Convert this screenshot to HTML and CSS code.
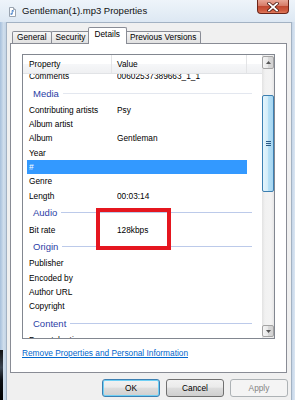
FILE: index.html
```html
<!DOCTYPE html>
<html lang="en">
<head>
    <meta charset="UTF-8">
    <meta name="viewport" content="width=device-width, initial-scale=1.0">
    <title>Gentleman(1).mp3 Properties</title>
    <link rel="stylesheet" href="styles.css">
</head>
<body>

<div class="window">
    <!-- title bar -->
    <div class="titlebar">
        <svg class="file-icon" viewBox="0 0 7 10" width="7" height="10">
            <path d="M0.5 0.5 H4.5 L6.5 2.5 V9.5 H0.5 Z" fill="#fff" stroke="#9aa4b0" stroke-width="1"/>
            <path d="M4.5 0.5 V2.5 H6.5" fill="#e4e8ee" stroke="#9aa4b0" stroke-width="1"/>
            <path d="M3.2 3.4 V6.8" stroke="#2f6fc0" stroke-width="0.9"/>
            <path d="M3.2 3.4 L5 4.2" stroke="#2f6fc0" stroke-width="0.9"/>
            <ellipse cx="2.4" cy="7" rx="1.1" ry="0.8" fill="#2f6fc0"/>
        </svg>
        <span class="title">Gentleman(1).mp3 Properties</span>
        <div class="close">
            <svg viewBox="0 0 12 10" width="12" height="10">
                <path d="M2 1.5 L10 8.5 M10 1.5 L2 8.5" stroke="#4a1a12" stroke-width="3.4" stroke-linecap="square"/>
                <path d="M2 1.5 L10 8.5 M10 1.5 L2 8.5" stroke="#fff" stroke-width="1.8" stroke-linecap="square"/>
            </svg>
        </div>
    </div>

    <div class="frame">
        <div class="edge edge-left"></div>

        <div class="client">
            <div class="tabs">
                <div class="tab">General</div>
                <div class="tab">Security</div>
                <div class="tab active">Details</div>
                <div class="tab">Previous Versions</div>
            </div>

            <div class="panel">
                <div class="listview">
                    <div class="list-main">
                        <div class="list-header">
                            <div class="col col-prop">Property</div>
                            <div class="col col-value">Value</div>
                            <div class="col col-rest"></div>
                        </div>
                        <div class="list-body">
                            <div class="list-rows">
                                <div class="row"><span class="cell-prop">Comments</span><span class="cell-value">00602537389663_1_1</span></div>
                                <div class="group faded">Media</div>
                                <div class="row"><span class="cell-prop">Contributing artists</span><span class="cell-value">Psy</span></div>
                                <div class="row"><span class="cell-prop">Album artist</span><span class="cell-value"></span></div>
                                <div class="row"><span class="cell-prop">Album</span><span class="cell-value">Gentleman</span></div>
                                <div class="row"><span class="cell-prop">Year</span><span class="cell-value"></span></div>
                                <div class="row selected"><span class="cell-prop">#</span><span class="cell-value"></span></div>
                                <div class="row"><span class="cell-prop">Genre</span><span class="cell-value"></span></div>
                                <div class="row"><span class="cell-prop">Length</span><span class="cell-value">00:03:14</span></div>
                                <div class="group">Audio</div>
                                <div class="row"><span class="cell-prop">Bit rate</span><span class="cell-value">128kbps</span></div>
                                <div class="group">Origin</div>
                                <div class="row"><span class="cell-prop">Publisher</span><span class="cell-value"></span></div>
                                <div class="row"><span class="cell-prop">Encoded by</span><span class="cell-value"></span></div>
                                <div class="row"><span class="cell-prop">Author URL</span><span class="cell-value"></span></div>
                                <div class="row"><span class="cell-prop">Copyright</span><span class="cell-value"></span></div>
                                <div class="group">Content</div>
                                <div class="row"><span class="cell-prop">Parental rating reason</span><span class="cell-value"></span></div>
                            </div>
                        </div>
                    </div>

                    <div class="scrollbar">
                        <div class="sb-btn">
                            <svg viewBox="0 0 5 3" width="5" height="3"><path d="M0 3 L2.5 0 L5 3 Z" fill="#555"/></svg>
                        </div>
                        <div class="sb-track">
                            <div class="sb-thumb">
                                <svg viewBox="0 0 5 5" width="5" height="5">
                                    <path d="M0 0.5 H5 M0 2.5 H5 M0 4.5 H5" stroke="#2c5a86" stroke-width="1"/>
                                </svg>
                            </div>
                        </div>
                        <div class="sb-btn sb-down">
                            <svg viewBox="0 0 5 3" width="5" height="3"><path d="M0 0 L2.5 3 L5 0 Z" fill="#555"/></svg>
                        </div>
                    </div>
                </div>

                <a class="remove-link" href="#">Remove Properties and Personal Information</a>
            </div>

            <div class="buttons">
                <button type="button" class="btn default">OK</button>
                <button type="button" class="btn">Cancel</button>
                <button type="button" class="btn" disabled>Apply</button>
            </div>
        </div>

        <div class="edge edge-right"></div>
    </div>

    <!-- red annotation box -->
    <div class="mark"></div>
</div>

</body>
</html>
```

FILE: styles.css
```css
body {
    margin: 0;
    width: 295px;
    height: 400px;
    overflow: hidden;
    font-family: "Liberation Sans", Arial, sans-serif;
    font-size: 8.3px;
    color: #000;
}

.window {
    position: relative;
    width: 295px;
    height: 400px;
    display: flex;
    flex-direction: column;
    background: #d6e3f0;
}

/* title bar */
.titlebar {
    height: 22px;
    flex: 0 0 22px;
    display: flex;
    align-items: flex-start;
    background: linear-gradient(to bottom, #eef4fa, #dde8f3);
}

.file-icon {
    margin: 7px 0 0 9px;
}

.title {
    margin: 5px 0 0 6px;
    font-size: 9.5px;
    line-height: 12px;
    color: #111;
}

.close {
    margin-left: auto;
    margin-right: 6px;
    width: 32px;
    height: 14px;
    box-sizing: border-box;
    border: 1px solid #6b2418;
    border-top: none;
    border-radius: 0 0 4px 4px;
    background: linear-gradient(to bottom, #e8a696, #d67a66 45%, #c14a32 50%, #cf5a3f 80%, #e07a5c);
    display: flex;
    align-items: center;
    justify-content: center;
}

/* frame */
.frame {
    flex: 1;
    display: flex;
}

.edge-left {
    width: 6px;
    background:
        linear-gradient(to bottom, #111 0, #3a4450 35%, #0c0f14 60%, #000) left bottom / 3px 50px no-repeat,
        linear-gradient(to right, #a7c0dc, #d0deec 60%, #c3d4e6);
}

.edge-right {
    width: 3px;
    background: linear-gradient(to right, #c6d6e8, #dbe6f2);
}

.client {
    flex: 1;
    background: #f0f0f0;
    border: 1px solid #a3b2c3;
    border-bottom: none;
    padding: 5px 4px 0 3px;
    display: flex;
    flex-direction: column;
}

/* tabs */
.tabs {
    height: 15px;
    display: flex;
    align-items: flex-end;
    padding-left: 2px;
    position: relative;
    z-index: 1;
}

.tab {
    height: 11px;
    line-height: 11px;
    padding: 0 4px;
    border: 1px solid #898c95;
    border-bottom: none;
    margin-left: -1px;
    border-radius: 2px 2px 0 0;
    background: linear-gradient(to bottom, #f7f7f7, #ebebeb 50%, #e1e1e1);
    white-space: nowrap;
}

.tab:first-child {
    margin-left: 0;
}

.tab.active {
    height: 16px;
    line-height: 13px;
    margin: 0 -2px -1px -3px;
    padding: 0 6px;
    background: #fff;
    position: relative;
    z-index: 2;
}

.tab.active + .tab {
    margin-left: 0;
}

/* panel */
.panel {
    height: 330px;
    flex: 0 0 330px;
    box-sizing: border-box;
    border: 1px solid #898c95;
    background: #fff;
    padding: 10px 11px 0;
}

.listview {
    height: 285px;
    box-sizing: border-box;
    border: 1px solid #828790;
    display: flex;
}

.list-main {
    width: 239px;
    flex: none;
    display: flex;
    flex-direction: column;
}

.list-header {
    height: 19px;
    flex: 0 0 19px;
    display: flex;
    background: linear-gradient(to bottom, #fff, #fff 50%, #f6f7f9 50%, #eff0f2);
    border-bottom: 1px solid #e1e3e6;
    box-sizing: border-box;
    position: relative;
    z-index: 1;
}

.col {
    line-height: 18px;
    border-right: 1px solid #e3e4e6;
    box-sizing: border-box;
}

.col-prop {
    width: 89px;
    padding-left: 6px;
}

.col-value {
    width: 135px;
    padding-left: 5px;
}

.col-rest {
    flex: 1;
    border-right: none;
}

.list-body {
    flex: 1;
    overflow: hidden;
}

.list-rows {
    margin-top: -5px;
}

.row {
    display: flex;
    height: 14.33px;
    line-height: 14.33px;
    margin-left: 4px;
    width: 220px;
    white-space: nowrap;
}

.cell-prop {
    width: 88px;
    padding-left: 2px;
    overflow: hidden;
}

.cell-value {
    flex: 1;
    overflow: hidden;
}

.row.selected {
    background: #3399ff;
    color: #fff;
}

.group {
    height: 19.5px;
    display: flex;
    align-items: center;
    padding: 0 10px;
    font-size: 9.5px;
    color: #2b3ea6;
}

.group::after {
    content: "";
    flex: 1;
    height: 1px;
    margin-left: 4px;
    background: #bccaea;
}

.group.faded::after {
    background: #e3e7ef;
}

/* scrollbar */
.scrollbar {
    width: 12px;
    flex: none;
    display: flex;
    flex-direction: column;
    background: linear-gradient(to right, #e2e2e2, #f1f1f1 25%, #f3f3f3 75%, #e6e6e6);
}

.sb-btn {
    height: 13px;
    flex: 0 0 13px;
    margin-top: 1px;
    box-sizing: border-box;
    border: 1px solid #a4a4a4;
    border-radius: 2px;
    background: linear-gradient(to right, #f4f4f4, #e8e8e8 50%, #d9d9d9 50%, #d2d2d2);
    display: flex;
    align-items: center;
    justify-content: center;
}

.sb-down {
    height: 12px;
    flex-basis: 12px;
    margin: 0 0 1px;
}

.sb-track {
    flex: 1;
}

.sb-thumb {
    margin-top: 26px;
    height: 97px;
    box-sizing: border-box;
    border: 1px solid #3c7fb1;
    border-radius: 2px;
    background: linear-gradient(to right, #e4f5fc, #d4edf9 45%, #b6e0f6 55%, #a6d6f1);
    display: flex;
    align-items: center;
    justify-content: center;
}

.remove-link {
    display: block;
    margin-top: 8px;
    line-height: 12px;
    color: #0066cc;
    text-decoration: underline;
    white-space: nowrap;
}

/* buttons */
.buttons {
    display: flex;
    justify-content: flex-end;
    gap: 6px;
    margin-top: 6px;
    margin-right: -1px;
}

.btn {
    width: 58px;
    height: 18px;
    padding: 0;
    border: 1px solid #707070;
    border-radius: 3px;
    background: linear-gradient(to bottom, #f2f2f2, #ebebeb 45%, #dddddd 50%, #cfcfcf);
    font-family: inherit;
    font-size: 8.3px;
    color: #000;
}

.btn.default {
    border-color: #3c7fb1;
    box-shadow: inset 0 0 0 1px #6fd0f5;
}

.btn:disabled {
    border-color: #adb2b5;
    background: #f4f4f4;
    color: #838383;
}

.mark {
    position: absolute;
    left: 96px;
    top: 208px;
    width: 75px;
    height: 42px;
    box-sizing: border-box;
    border: 4px solid #e5161f;
}
```
